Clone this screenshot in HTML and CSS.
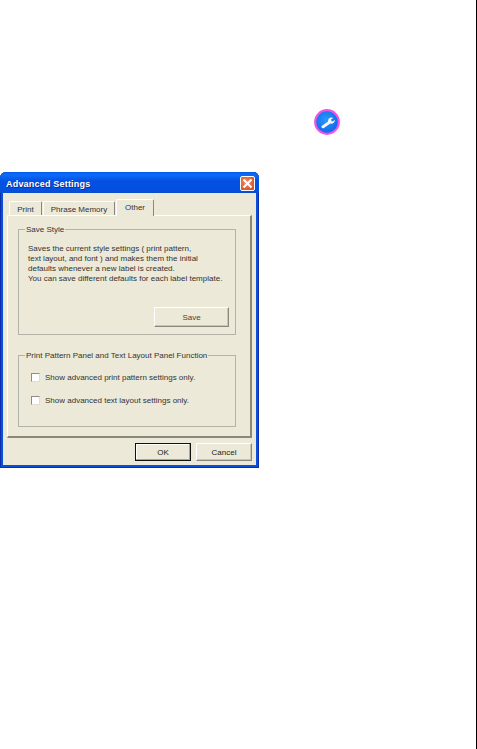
FILE: index.html
```html
<!DOCTYPE html>
<html lang="en">
<head>
<meta charset="utf-8">
<title>Advanced Settings</title>
<link rel="stylesheet" href="styles.css">
</head>
<body>
<main class="page">
  <div class="icon-row">
    <svg class="tool-icon" width="28" height="28" viewBox="0 0 28 28" aria-hidden="true">
      <defs>
        <radialGradient id="disc" cx="45%" cy="40%" r="65%">
          <stop offset="0" stop-color="#2a98ff"/>
          <stop offset="1" stop-color="#0a62e4"/>
        </radialGradient>
      </defs>
      <circle cx="14" cy="14" r="11.8" fill="url(#disc)" stroke="#f052e4" stroke-width="2.2"/>
      <path d="M8.6 18 L15 13.4 C14.8 11 16.6 9.4 19 9.6 L20 9.9 L18 11.6 L18.4 13 L19.8 13.4 L21.8 11.7 C22.2 14.2 20 16 17.2 15.6 L11 20 C9.4 20.8 7.8 19.2 8.6 18 Z" fill="#f6f6f6"/>
    </svg>
  </div>
  <section class="dialog">
    <header class="titlebar">
      <span class="title">Advanced Settings</span>
      <span class="close">
        <svg width="11" height="11" viewBox="0 0 11 11" aria-hidden="true"><path d="M1.5 1.5 L9.5 9.5 M9.5 1.5 L1.5 9.5" stroke="#fff" stroke-width="2.2"/></svg>
      </span>
    </header>
    <div class="client">
      <div class="tabs">
        <span class="tab tab-print">Print</span>
        <span class="tab tab-phrase">Phrase Memory</span>
        <span class="tab tab-active">Other</span>
      </div>
      <div class="panel">
        <fieldset class="group group-save">
          <legend>Save Style</legend>
          <p class="desc">Saves the current style settings ( print pattern,<br>text layout, and font ) and makes them the initial<br>defaults whenever a new label is created.<br>You can save different defaults for each label template.</p>
          <div class="save-row"><button class="btn btn-save" type="button">Save</button></div>
        </fieldset>
        <fieldset class="group group-func">
          <legend>Print Pattern Panel and Text Layout Panel Function</legend>
          <label class="check"><span class="box"></span>Show advanced print pattern settings only.</label>
          <label class="check"><span class="box"></span>Show advanced text layout settings only.</label>
        </fieldset>
      </div>
      <footer class="actions">
        <button class="btn btn-default" type="button">OK</button>
        <button class="btn" type="button">Cancel</button>
      </footer>
    </div>
  </section>
</main>
</body>
</html>
```
FILE: styles.css
```css
* { box-sizing: border-box; }
html, body { margin: 0; padding: 0; background: #fff; }
body { font-family: "Liberation Sans", Arial, sans-serif; font-size: 8px; color: #222; }
.page {
  width: 477px;
  height: 749px;
  border-right: 1px solid #000;
  overflow: hidden;
}
.icon-row {
  height: 172px;
  padding: 108px 0 0 313px;
}
.tool-icon { display: block; }
.dialog {
  width: 259px;
  height: 296px;
  border-radius: 6px 6px 0 0;
  background: #0a4fdc;
  padding: 0 3px 3px;
  display: flex;
  flex-direction: column;
  box-shadow: inset 1px 0 #0a2fa8, inset -1px 0 #0a2fa8, inset 0 -1px #0a2fa8;
}
.titlebar {
  height: 21px;
  margin: 0 -3px;
  padding: 2px 4px 0 6px;
  border-radius: 6px 6px 0 0;
  background: linear-gradient(#0a5ae8 0, #0a6cf8 3px, #0650e0 9px, #0250e4 17px, #0a4fc8 21px);
  display: flex;
  align-items: center;
  justify-content: space-between;
}
.title {
  color: #fff;
  font-weight: 700;
  font-size: 9px;
  letter-spacing: 0.2px;
  text-shadow: 1px 1px 0 #0a2f90;
}
.close {
  width: 15px;
  height: 15px;
  border: 1px solid #fff;
  border-radius: 2px;
  background: radial-gradient(circle at 40% 40%, #f08a64, #d4431c);
  display: flex;
  align-items: center;
  justify-content: center;
}
.client {
  flex: 1;
  background: #ece9d8;
  padding: 6px 4px 0;
  display: flex;
  flex-direction: column;
}
.tabs {
  height: 16px;
  display: flex;
  align-items: flex-end;
  padding-left: 2px;
  position: relative;
  z-index: 1;
}
.tab {
  height: 14px;
  padding-top: 2px;
  text-align: center;
  margin-right: 1px;
  background: #ece9d8;
  border: 1px solid #fff;
  border-bottom: 0;
  border-right: 1px solid #8a887c;
  border-radius: 2px 2px 0 0;
  line-height: 11px;
  color: #333;
}
.tab-print { width: 33px; }
.tab-phrase { width: 72px; }
.tab-active {
  width: 38px;
  height: 17px;
  margin-bottom: -1px;
}
.panel {
  height: 223px;
  width: 245px;
  border: 1px solid #fff;
  border-right: 2px solid #8a887c;
  border-bottom: 2px solid #8a887c;
  padding: 7px 0 0 10px;
  display: flex;
  flex-direction: column;
  gap: 14px;
}
.group {
  margin: 0;
  padding: 0;
  border: 1px solid #b4b3a8;
  min-width: 0;
  width: 218px;
}
.group legend {
  padding: 1px 1px 0;
  margin-left: 6px;
  line-height: 11px;
  color: #333;
  white-space: nowrap;
}
.group-save { height: 112px; }
.group-func { height: 78px; }
.desc {
  margin: 9px 0 0 9px;
  line-height: 10px;
  color: #333;
  white-space: nowrap;
}
.save-row {
  margin-top: 23px;
  display: flex;
  justify-content: flex-end;
  padding-right: 6px;
}
.btn {
  width: 56px;
  height: 18px;
  padding: 0;
  border: 1px solid #fff;
  border-right-color: #8a887c;
  border-bottom-color: #8a887c;
  background: #ece9d8;
  font-family: inherit;
  font-size: 8px;
  color: #222;
  box-shadow: inset -1px -1px 0 #c8c5b2;
}
.btn-save { width: 75px; height: 20px; padding-top: 1px; color: #444; }
.btn-default { border: 1px solid #111; box-shadow: inset -1px -1px 0 #a8a698, inset 1px 1px 0 #fff; }
.check {
  display: flex;
  align-items: center;
  gap: 5px;
  height: 12px;
  margin: 10px 0 0 12px;
  color: #333;
}
.check + .check { margin-top: 11px; }
.box {
  width: 9px;
  height: 9px;
  background: #fff;
  border: 1px solid #8f8d82;
  border-right-color: #ddd;
  border-bottom-color: #ddd;
}
.actions {
  display: flex;
  justify-content: flex-end;
  gap: 5px;
  padding: 5px 0 0;
}
```
